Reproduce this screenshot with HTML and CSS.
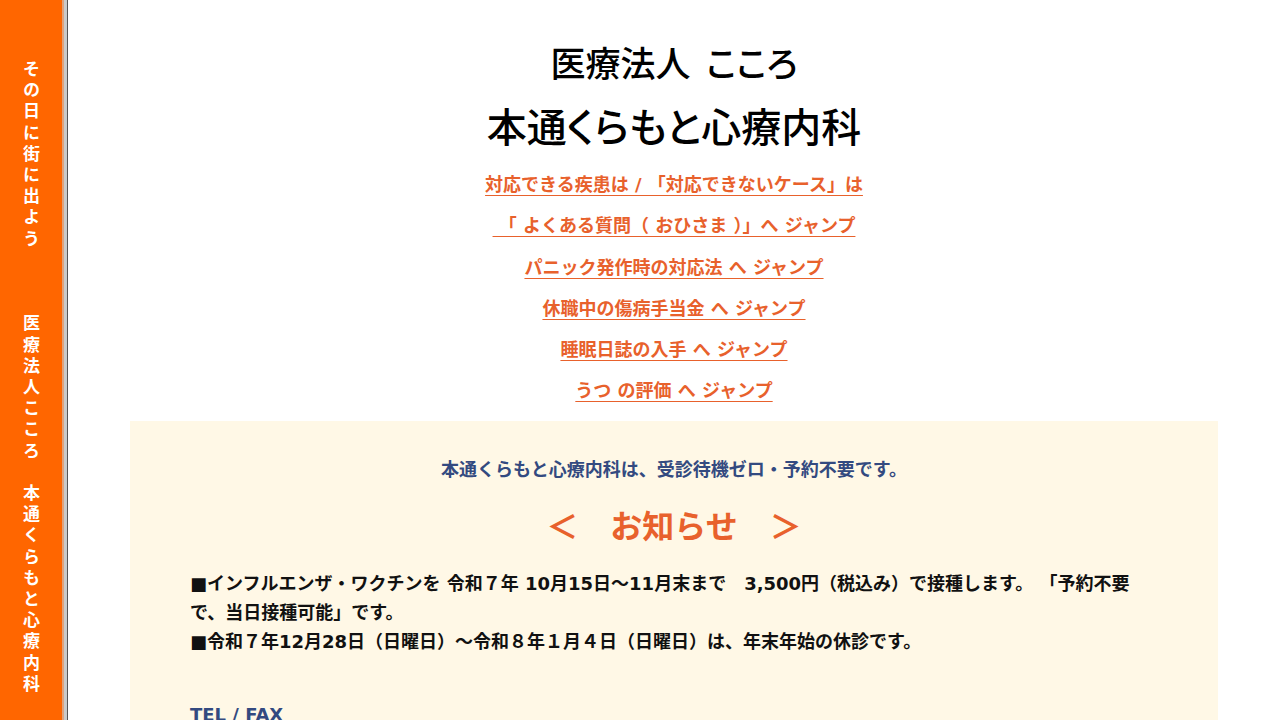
FILE: index.html
```html
<!DOCTYPE html>
<html lang="ja">
<head>
<meta charset="utf-8">
<title>本通くらもと心療内科</title>
<link rel="stylesheet" href="styles.css">
</head>
<body>
<div class="page">
  <aside class="side">
    <div class="side-text">その日に街に出よう　　　医療法人こころ　本通くらもと心療内科</div>
  </aside>
  <div class="side-edge"></div>
  <main class="main">
    <h1 class="corp">医療法人 &nbsp;こころ</h1>
    <h2 class="clinic">本通くらもと心療内科</h2>
    <nav class="links">
      <a href="#" class="jump">対応できる疾患は / 「対応できないケース」は</a>
      <a href="#" class="jump">&nbsp;「 よくある質問（ おひさま ）」へ ジャンプ</a>
      <a href="#" class="jump">パニック発作時の対応法 へ ジャンプ</a>
      <a href="#" class="jump">休職中の傷病手当金 へ ジャンプ</a>
      <a href="#" class="jump">睡眠日誌の入手 へ ジャンプ</a>
      <a href="#" class="jump">うつ の評価 へ ジャンプ</a>
    </nav>
    <section class="notice">
      <p class="lead">本通くらもと心療内科は、受診待機ゼロ・予約不要です。</p>
      <h3 class="notice-title">＜　お知らせ　＞</h3>
      <div class="notice-body">
        <p>■インフルエンザ・ワクチンを 令和７年 10月15日〜11月末まで　3,500円（税込み）で接種します。 「予約不要で、当日接種可能」です。</p>
        <p>■令和７年12月28日（日曜日）〜令和８年１月４日（日曜日）は、年末年始の休診です。</p>
      </div>
      <p class="tel">TEL / FAX</p>
    </section>
  </main>
</div>
</body>
</html>
```

FILE: styles.css
```css
html, body {
  margin: 0;
  padding: 0;
  background: #ffffff;
}
body {
  font-family: "DejaVu Sans", "Noto Sans CJK JP", sans-serif;
  font-weight: bold;
  font-size: 18px;
}
.page {
  display: flex;
  min-height: 100vh;
}
.side {
  width: 62px;
  flex: 0 0 62px;
  background: #ff6600;
  border-right: 2px solid #e0a27c;
  display: flex;
  justify-content: center;
  padding-top: 60px;
  box-sizing: content-box;
}
.side-text {
  writing-mode: vertical-rl;
  text-orientation: upright;
  color: #ffffff;
  font-family: "Noto Sans CJK JP", sans-serif;
  font-weight: bold;
  font-size: 17px;
  letter-spacing: 4.2px;
  line-height: 20px;
}
.side-edge {
  width: 3px;
  flex: 0 0 3px;
  background: #cacaca;
  border-right: 1px solid #555555;
}
.main {
  flex: 1;
  display: flex;
  flex-direction: column;
  align-items: center;
  padding-top: 40px;
}
.corp {
  margin: 0;
  font-family: "Noto Sans CJK JP", sans-serif;
  font-weight: 500;
  font-size: 35px;
  line-height: 44px;
  color: #000000;
  font-feature-settings: "palt";
}
.clinic {
  margin: 16px 0 0;
  font-family: "Noto Sans CJK JP", sans-serif;
  font-weight: 500;
  font-size: 40px;
  line-height: 50px;
  color: #000000;
  font-feature-settings: "palt";
}
.links {
  margin-top: 14px;
  display: flex;
  flex-direction: column;
  align-items: center;
}
.jump {
  display: block;
  color: #e8612c;
  font-size: 18px;
  line-height: 41.3px;
  text-decoration: underline;
  text-decoration-thickness: 1px;
  text-underline-offset: 4px;
}
.notice {
  align-self: stretch;
  margin: 9px 62px 0;
  background: #fff8e6;
  padding: 37px 60px 0;
}
.lead {
  margin: 0;
  text-align: center;
  color: #334a80;
  font-size: 18px;
  line-height: 24px;
}
.notice-title {
  margin: 22px 0 0;
  text-align: center;
  color: #e8612c;
  font-family: "Noto Sans CJK JP", sans-serif;
  font-weight: bold;
  font-size: 32px;
  line-height: 40px;
}
.notice-body {
  margin-top: 25px;
  color: #111111;
  font-size: 18px;
  line-height: 29px;
}
.notice-body p {
  margin: 0;
}
.tel {
  margin: 47px 0 0;
  color: #334a80;
  font-size: 18px;
  line-height: 24px;
}
```
